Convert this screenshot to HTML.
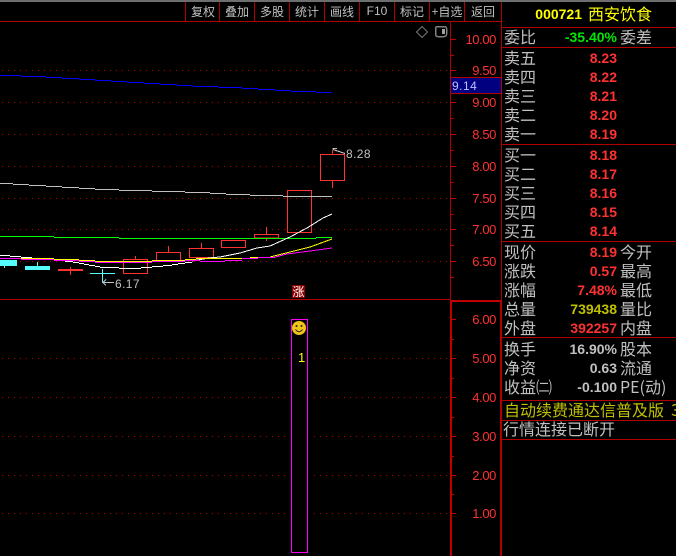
<!DOCTYPE html>
<html lang="zh"><head><meta charset="utf-8"><title>000721</title>
<style>
html,body{margin:0;padding:0;background:#000;width:676px;height:556px;overflow:hidden}
svg{display:block}
text{font-family:"WenQuanYi Zen Hei","Noto Sans CJK SC",sans-serif}
.g{font-size:16px;fill:#c0c0c0}
.t{font-size:12px;fill:#c0c0c0;text-anchor:middle}
.n{font-family:"Liberation Sans",sans-serif;font-size:14px;font-weight:bold;text-anchor:end;fill:#ff3232}
.a{font-family:"Liberation Sans",sans-serif;font-size:13px;fill:#ff3232;text-anchor:end;letter-spacing:-.4px}
.l{font-family:"Liberation Sans",sans-serif;font-size:12px;letter-spacing:.4px;fill:#c0c0c0}
.c{shape-rendering:crispEdges}
</style></head><body>
<svg width="676" height="556" viewBox="0 0 676 556" xmlns="http://www.w3.org/2000/svg">
<rect width="676" height="556" fill="#000"/>
<rect width="676" height="2" fill="#6e6e6e"/>
<g class="c" fill="none">
<!-- grid -->
<path d="M2 70.5H451M2 102.5H451M2 134.5H451M2 166.5H451M2 198.5H451M2 229.5H451M2 261.5H451M2 358.5H451M2 397.5H451M2 436.5H451M2 475.5H451M2 513.5H451" stroke="#c00000" stroke-dasharray="1 5"/>
<!-- frame -->
<path d="M0 21.5H501M185.5 2V21M219.5 2V21M254.5 2V21M289.5 2V21M324.5 2V21M359.5 2V21M394.5 2V21M429.5 2V21M464.5 2V21" stroke="#b00000"/>
<path d="M450.5 21V300M501.5 2V300M0 299.5H451" stroke="#b00000"/>
<path d="M451 300.5H501M451 301.5H501" stroke="#c00000"/>
<rect x="450" y="300" width="2" height="256" fill="#c00000"/>
<rect x="500" y="300" width="2" height="256" fill="#b00000"/>
<path d="M451 39.5H456M451 70.5H456M451 102.5H456M451 134.5H456M451 166.5H456M451 198.5H456M451 229.5H456M451 261.5H456M451 55.5H454M451 118.5H454M451 150.5H454M451 182.5H454M451 214.5H454M451 245.5H454M451 277.5H454M451 319.5H456M451 358.5H456M451 397.5H456M451 436.5H456M451 475.5H456M451 513.5H456M451 339.5H454M451 378.5H454M451 417.5H454M451 456.5H454M451 494.5H454" stroke="#c00000"/>
<!-- price tag -->
<rect x="451" y="77" width="50" height="16" fill="#000080"/>
<path d="M451 77.5H501M451 93.5H501" stroke="#b00000"/>
<!-- panel lines -->
<path d="M502 27.5H676M502 47.5H676M502 144.5H676M502 241.5H676M502 337.5H676M502 400.5H676M502 420.5H676M502 439.5H676" stroke="#b00000"/>
<!-- down candles -->
<rect x="0" y="260" width="17" height="6" fill="#54fcfc"/><path d="M4.5 266V268" stroke="#54fcfc"/>
<rect x="25" y="266" width="25" height="4" fill="#54fcfc"/><path d="M37.5 262V266" stroke="#54fcfc"/>
<rect x="58" y="269" width="25" height="2" fill="#ff3232"/><path d="M70.5 267V275" stroke="#ff3232"/>
<path d="M90 273.5H115M102.5 269V283" stroke="#54fcfc"/>
<!-- up candles -->
<g stroke="#ff3232">
<rect x="123.5" y="259.5" width="24" height="14"/><path d="M135.5 256V259"/>
<rect x="156.5" y="252.5" width="24" height="9"/><path d="M168.5 246V252"/>
<rect x="189.5" y="248.5" width="24" height="9"/><path d="M201.5 243V248"/>
<rect x="221.5" y="240.5" width="24" height="7"/>
<rect x="254.5" y="234.5" width="24" height="3.5"/><path d="M266.5 227V234M266.5 238V241"/>
<rect x="287.5" y="190.5" width="24" height="42"/>
<rect x="320.5" y="154.5" width="24" height="26"/><path d="M332.5 150V154M332.5 181V188"/>
</g>
<!-- MA blue -->
<path d="M0 75.5H21M21 76.5H46M46 77.5H62M62 78.5H79M79 79.5H95M95 80.5H111M111 81.5H127M127 82.5H144M144 83.5H160M160 84.5H177M177 85.5H193M193 86.5H218M218 87.5H242M242 88.5H258M258 89.5H275M275 90.5H291M291 91.5H316M316 92.5H332" stroke="#0000ff"/>
<!-- MA gray -->
<path d="M0 183.5H13M13 184.5H29M29 185.5H46M46 186.5H62M62 187.5H79M79 188.5H95M95 189.5H119M119 190.5H152M152 191.5H185M185 192.5H210M210 193.5H226M226 194.5H250M250 195.5H283M283 196.5H332" stroke="#c0c0c0"/>
<!-- MA green -->
<path d="M0 236.5H54M54 237.5H119M119 238.5H316M316 237.5H332" stroke="#00ff00"/>
<!-- MA white -->
<path d="M0 255.5H10M10 256.5H21M21 257.5H32M65 261.5H73M73 262.5H79M79 263.5H84M84 264.5H89M89 265.5H95M95 266.5H100M100 267.5H119M119 268.5H141M141 267.5H152M152 266.5H163M163 265.5H172M172 264.5H178M178 263.5H185M185 262.5H192" stroke="#fff"/>
<polyline points="192,261 209,258 220,257 240,253 257,248 270,246 290,237 307,228 323,218 332,214" stroke="#fff"/>
<!-- MA yellow -->
<path d="M21 258.5H54M54 259.5H79M79 260.5H95M95 261.5H152M152 260.5H185M185 259.5H196M196 258.5H242M250 257.5H270" stroke="#ffff00"/>
<polyline points="270,257 290,252 310,247 332,239" stroke="#ffff00"/>
<!-- MA magenta -->
<path d="M0 258.5H21M21 259.5H54M54 260.5H79M79 261.5H95M95 262.5H152M152 261.5H185M185 260.5H200M200 261.5H225M225 260.5H242M242 258.5H258M258 257.5H275" stroke="#ff00ff"/>
<polyline points="275,257 287,254 310,251 332,248" stroke="#ff00ff"/>
<!-- label arrows -->
<path d="M103 282.5H114M103 282.5L106 279.5M103 282.5L106 285.5" stroke="#c0c0c0"/>
<path d="M333 149.5L345 153.5M333 149.5V148.5H337" stroke="#c0c0c0"/>
<!-- volume bar -->
<rect x="289" y="318" width="21" height="236" fill="#000"/>
<rect x="291.5" y="319.5" width="16" height="233" stroke="#ff00ff"/>
<!-- 涨 badge -->
<rect x="292" y="285" width="13" height="13" fill="#8c0000"/>
<!-- small icons -->
<path d="M422 26.5L427.5 32 422 37.5 416.5 32Z" stroke="#707070"/>
<rect x="435.5" y="26.5" width="11" height="10" rx="2" stroke="#808080" stroke-width="1.5"/>
<rect x="442" y="29" width="3" height="5" fill="#a0a0a0"/>
</g>
<!-- smiley -->
<circle cx="299" cy="328" r="7" fill="#f0c418"/>
<circle cx="296.5" cy="326" r="1" fill="#222"/><circle cx="301.5" cy="326" r="1" fill="#222"/>
<path d="M295.5 329.5Q299 334 302.5 329.5" fill="none" stroke="#222" stroke-width="1"/>
<text x="298" y="362" font-size="13" style="font-family:'Liberation Sans',sans-serif" fill="#ffff00">1</text>
<text x="298.5" y="296" font-size="12" fill="#fff" text-anchor="middle">涨</text>
<!-- toolbar -->
<text class="t" x="203" y="16">复权</text><text class="t" x="237" y="16">叠加</text><text class="t" x="272" y="16">多股</text><text class="t" x="307" y="16">统计</text><text class="t" x="342" y="16">画线</text>
<text x="377" y="15" text-anchor="middle" style="font-family:'Liberation Sans',sans-serif;font-size:12px" fill="#c0c0c0">F10</text>
<text class="t" x="412" y="16">标记</text><text class="t" x="447" y="16">+自选</text><text class="t" x="483" y="16">返回</text>
<!-- axis -->
<text class="a" x="496" y="44">10.00</text><text class="a" x="496" y="75">9.50</text><text class="a" x="496" y="107">9.00</text><text class="a" x="496" y="139">8.50</text><text class="a" x="496" y="171">8.00</text><text class="a" x="496" y="203">7.50</text><text class="a" x="496" y="234">7.00</text><text class="a" x="496" y="266">6.50</text>
<text class="a" x="496" y="324">6.00</text><text class="a" x="496" y="363">5.00</text><text class="a" x="496" y="402">4.00</text><text class="a" x="496" y="441">3.00</text><text class="a" x="496" y="480">2.00</text><text class="a" x="496" y="518">1.00</text>
<text x="452" y="90" style="font-family:'Liberation Sans',sans-serif;font-size:12px" fill="#c0c0ff" letter-spacing=".5">9.14</text>
<text class="l" x="115" y="288">6.17</text><text class="l" x="346" y="158">8.28</text>
<!-- panel -->
<text x="582" y="19" class="n" style="fill:#ffff00">000721</text>
<text x="588" y="20" class="g" style="fill:#ffff00">西安饮食</text>
<text class="g" x="504" y="43">委比</text><text class="n" x="617" y="42" style="fill:#00e600">-35.40%</text><text class="g" x="620" y="43">委差</text>
<text class="g" x="504" y="64">卖五</text><text class="n" x="617" y="63">8.23</text>
<text class="g" x="504" y="83">卖四</text><text class="n" x="617" y="82">8.22</text>
<text class="g" x="504" y="102">卖三</text><text class="n" x="617" y="101">8.21</text>
<text class="g" x="504" y="121">卖二</text><text class="n" x="617" y="120">8.20</text>
<text class="g" x="504" y="140">卖一</text><text class="n" x="617" y="139">8.19</text>
<text class="g" x="504" y="161">买一</text><text class="n" x="617" y="160">8.18</text>
<text class="g" x="504" y="180">买二</text><text class="n" x="617" y="179">8.17</text>
<text class="g" x="504" y="199">买三</text><text class="n" x="617" y="198">8.16</text>
<text class="g" x="504" y="218">买四</text><text class="n" x="617" y="217">8.15</text>
<text class="g" x="504" y="237">买五</text><text class="n" x="617" y="236">8.14</text>
<text class="g" x="504" y="258">现价</text><text class="n" x="617" y="257">8.19</text><text class="g" x="620" y="258">今开</text>
<text class="g" x="504" y="277">涨跌</text><text class="n" x="617" y="276">0.57</text><text class="g" x="620" y="277">最高</text>
<text class="g" x="504" y="296">涨幅</text><text class="n" x="617" y="295">7.48%</text><text class="g" x="620" y="296">最低</text>
<text class="g" x="504" y="315">总量</text><text class="n" x="617" y="314" style="fill:#c0c000">739438</text><text class="g" x="620" y="315">量比</text>
<text class="g" x="504" y="334">外盘</text><text class="n" x="617" y="333">392257</text><text class="g" x="620" y="334">内盘</text>
<text class="g" x="504" y="355">换手</text><text class="n" x="617" y="354" style="fill:#c0c0c0">16.90%</text><text class="g" x="620" y="355">股本</text>
<text class="g" x="504" y="374">净资</text><text class="n" x="617" y="373" style="fill:#c0c0c0">0.63</text><text class="g" x="620" y="374">流通</text>
<text class="g" x="504" y="393">收益㈡</text><text class="n" x="617" y="392" style="fill:#c0c0c0">-0.100</text><text class="g" x="620" y="393">PE(动)</text>
<text class="g" x="504" y="416" style="fill:#c0c000">自动续费通达信普及版&#160;&#160;3</text>
<text class="g" x="503" y="435">行情连接已断开</text>
</svg>
</body></html>
